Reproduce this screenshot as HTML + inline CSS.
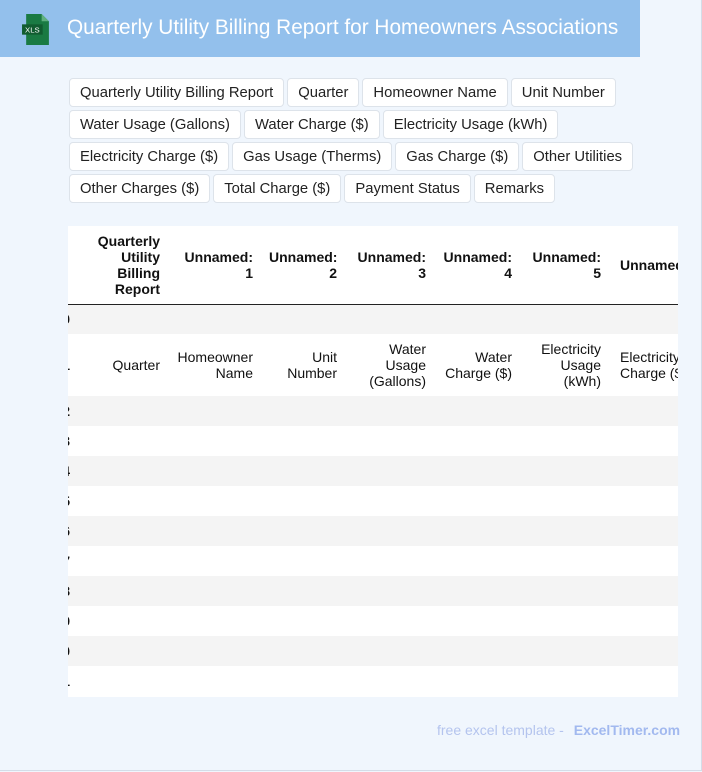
<!DOCTYPE html>
<html><head><meta charset="utf-8"><style>
*{margin:0;padding:0;box-sizing:border-box}
body{width:702px;height:772px;background:#f0f6fd;position:relative;overflow:hidden;font-family:"Liberation Sans",sans-serif}
.frame{position:absolute;left:0;top:0;width:702px;height:771px;border-right:1px solid #d4dde8;border-bottom:1px solid #d4dde8}
.hdr{position:absolute;left:0;top:0;width:640px;height:57px;background:#93c0ec}
.hdr .t{position:absolute;left:67px;top:16px;color:#fff;font-size:20.8px;white-space:nowrap}
.ico{position:absolute;left:22px;top:14px;width:29px;height:31px}
.chips{position:absolute;left:69px;top:78px;width:580px}
.row{display:flex;gap:3px;margin-bottom:3px}
.chip{height:29px;line-height:28px;padding:0 10px;background:#fff;border:1px solid #dde3ea;border-radius:4px;font-size:14.8px;color:#222;white-space:nowrap}
.wrap{position:absolute;left:68px;top:226px;width:610px;height:471px;overflow:hidden;background:#fff}
table{position:absolute;left:-28px;top:0;width:660px;border-collapse:collapse;table-layout:fixed;font-size:14px;color:#111}
td,th{text-align:right;padding:0 8px;vertical-align:middle;line-height:16px;overflow:hidden}
th{font-weight:bold}
thead tr{height:78px}
thead th{border-bottom:1px solid #222}
tbody tr{height:30px}
tbody tr.tall{height:62px}
tbody tr:nth-child(odd){background:#f4f4f4}
.foot{position:absolute;left:437px;top:722px;font-size:14px;color:#b4c4ee;white-space:nowrap}
.foot b{color:#a2b9ef;margin-left:6px}
</style></head><body>
<div class="frame"></div>
<div class="hdr">
<svg class="ico" viewBox="0 0 28 30"><path d="M4 0h15l7 7v23H4z" fill="#1a7a43"/><path d="M19 0v7h7z" fill="#5fb07f"/><rect x="0" y="10" width="20" height="10" fill="#115c30"/><text x="10" y="18" font-size="7.5" fill="#fff" text-anchor="middle" font-family="Liberation Sans">XLS</text></svg>
<div class="t">Quarterly Utility Billing Report for Homeowners Associations</div>
</div>
<div class="chips">
<div class="row"><div class="chip">Quarterly Utility Billing Report</div><div class="chip">Quarter</div><div class="chip">Homeowner Name</div><div class="chip">Unit Number</div></div>
<div class="row"><div class="chip">Water Usage (Gallons)</div><div class="chip">Water Charge ($)</div><div class="chip">Electricity Usage (kWh)</div></div>
<div class="row"><div class="chip">Electricity Charge ($)</div><div class="chip">Gas Usage (Therms)</div><div class="chip">Gas Charge ($)</div><div class="chip">Other Utilities</div></div>
<div class="row"><div class="chip">Other Charges ($)</div><div class="chip">Total Charge ($)</div><div class="chip">Payment Status</div><div class="chip">Remarks</div></div>
</div>
<div class="wrap">
<table>
<colgroup><col style="width:38px"><col style="width:90px"><col style="width:93px"><col style="width:84px"><col style="width:89px"><col style="width:86px"><col style="width:89px"><col style="width:91px"></colgroup>
<thead><tr><th></th><th>Quarterly Utility Billing Report</th><th>Unnamed: 1</th><th>Unnamed: 2</th><th>Unnamed: 3</th><th>Unnamed: 4</th><th>Unnamed: 5</th><th style="white-space:nowrap;text-align:left;padding-left:11px">Unnamed: 6</th></tr></thead>
<tbody>
<tr><th>0</th><td></td><td></td><td></td><td></td><td></td><td></td><td></td></tr>
<tr class="tall"><th>1</th><td>Quarter</td><td>Homeowner Name</td><td>Unit Number</td><td>Water Usage (Gallons)</td><td>Water Charge ($)</td><td>Electricity Usage (kWh)</td><td style="white-space:nowrap;text-align:left;padding-left:11px">Electricity<br>Charge ($)</td></tr>
<tr><th>2</th><td></td><td></td><td></td><td></td><td></td><td></td><td></td></tr>
<tr><th>3</th><td></td><td></td><td></td><td></td><td></td><td></td><td></td></tr>
<tr><th>4</th><td></td><td></td><td></td><td></td><td></td><td></td><td></td></tr>
<tr><th>5</th><td></td><td></td><td></td><td></td><td></td><td></td><td></td></tr>
<tr><th>6</th><td></td><td></td><td></td><td></td><td></td><td></td><td></td></tr>
<tr><th>7</th><td></td><td></td><td></td><td></td><td></td><td></td><td></td></tr>
<tr><th>8</th><td></td><td></td><td></td><td></td><td></td><td></td><td></td></tr>
<tr><th>9</th><td></td><td></td><td></td><td></td><td></td><td></td><td></td></tr>
<tr><th>10</th><td></td><td></td><td></td><td></td><td></td><td></td><td></td></tr>
<tr><th>11</th><td></td><td></td><td></td><td></td><td></td><td></td><td></td></tr>
</tbody></table>
</div>
<div class="foot">free excel template - <b>ExcelTimer.com</b></div>
</body></html>
